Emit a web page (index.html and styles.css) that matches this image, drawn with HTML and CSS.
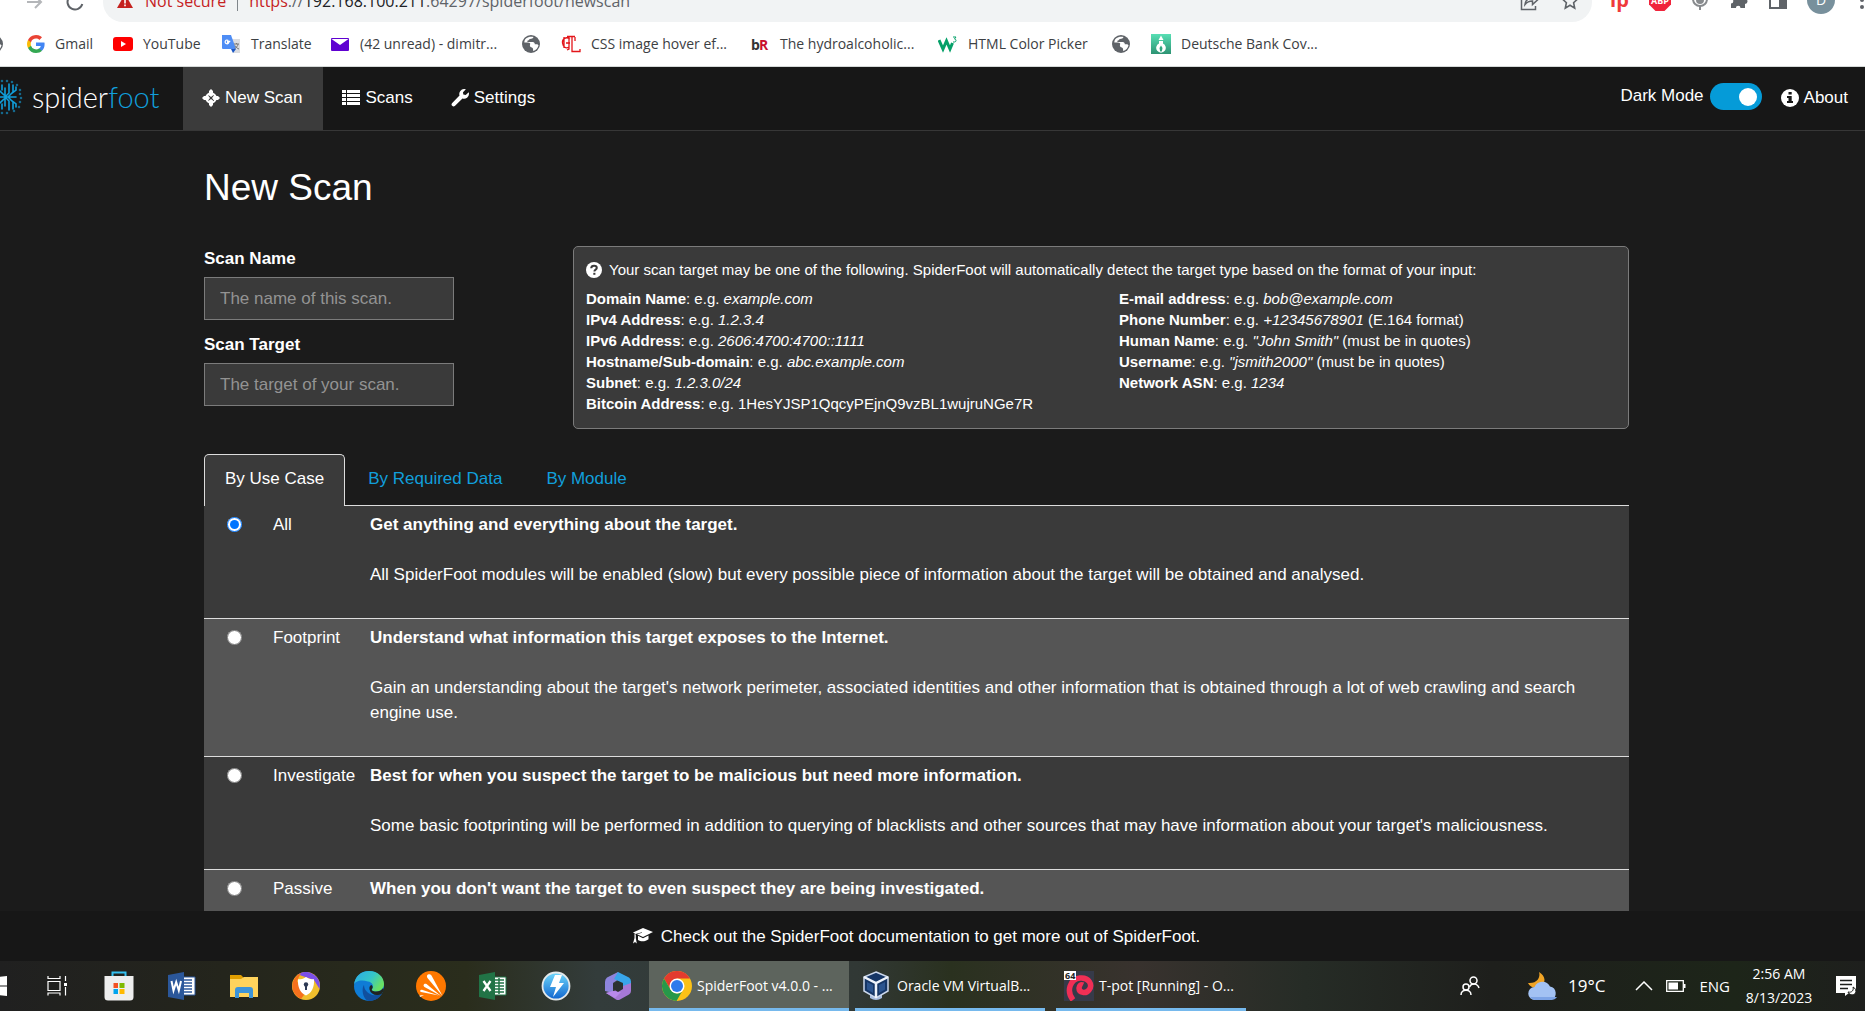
FILE: index.html
```html
<!DOCTYPE html>
<html lang="en">
<head>
<meta charset="utf-8">
<title>SpiderFoot v4.0.0 - New Scan</title>
<link rel="stylesheet" href="styles.css">
</head>
<body>
<svg class="defs" aria-hidden="true">
  <symbol id="globe" viewBox="0 0 20 20"><circle cx="10" cy="10" r="9" fill="#5f6368"/><path d="M5 4.500c2-1.800 5-2.300 7.500-1.500-.5 1.500-2 1.800-3.500 2-1 .2-1 1.300-2 1.500-1.200.3-.8 1.600.4 1.600h4.400c1.400 0 2 1 2 2.200h2c.9 0 1.400.6 1.700 1.200-.6 2.600-2.600 4.800-5.300 5.500-.3-1.400.2-2-.6-2.900-.7-.8-2.500-.6-2.700-2.300-.1-1.300.7-1.700.1-2.500-.8-1-3.300-.7-5.700-.8 0-1.500.6-3 1.700-4z" fill="#fff" /></symbol>
</svg>

<header class="browser">
  <div class="toolbar">
    <button class="tool forward" aria-label="Forward"><svg width="20" height="20" viewBox="0 0 20 20" fill="none" stroke="#b4b6b9" stroke-width="2"><path d="M2 10h14M10 4l6 6-6 6"/></svg></button>
    <button class="tool reload" aria-label="Reload"><svg width="20" height="20" viewBox="0 0 20 20" fill="none" stroke="#5f6368" stroke-width="2"><path d="M16 5.500A7.500 7.500 0 1 0 17.300 12"/><path d="M17 1v5h-5"/></svg></button>
    <div class="address">
      <svg width="16" height="16" viewBox="0 0 16 16"><path d="M8 1l8 14H0z" fill="#c5221f"/><path d="M7.200 6h1.600v4.500H7.200zM7.200 11.600h1.600v1.600H7.200z" fill="#fff"/></svg>
      <span class="warn">Not secure</span>
      <span class="bar"></span>
      <span class="url"><span class="warn">https</span>://<b>192.168.100.211</b>:64297/spiderfoot/newscan</span>
      <button class="tool share" aria-label="Share"><svg width="19" height="20" viewBox="0 0 19 20" fill="none" stroke="#5f6368" stroke-width="1.500"><path d="M5 5H1.500v13.500h14V15"/><path d="M5 13.500c.5-4 3-6.500 7.500-6.500V3.500l5.500 5-5.500 5V10C9 10 7 11 5 13.500z"/></svg></button>
      <button class="tool" aria-label="Bookmark this page"><svg width="18" height="18" viewBox="0 0 18 18" fill="none" stroke="#5f6368" stroke-width="1.600"><path d="M9 1.500l2.300 5 5.200.6-3.900 3.600 1.100 5.400L9 13.300l-4.700 2.800 1.100-5.400L1.500 7.100l5.200-.6z"/></svg></button>
    </div>
    <div class="extensions">
      <span class="ext-ip">Ip</span>
      <svg width="22" height="22" viewBox="0 0 22 22"><path d="M6.500 0h9L22 6.500v9L15.500 22h-9L0 15.500v-9z" fill="#f0243c"/><text x="11" y="15" text-anchor="middle" class="abp">ABP</text></svg>
      <svg width="18" height="24" viewBox="0 0 18 24" fill="none" stroke="#888b8e" stroke-width="2"><path d="M2 11a7 7 0 1 0 14 0"/><circle cx="9" cy="12" r="3" fill="#888b8e"/><path d="M9 18v4"/></svg>
      <svg width="20" height="20" viewBox="0 0 20 20"><path d="M7 4a2.500 2.500 0 0 1 5 0h4v5a2.500 2.500 0 0 1 0 5v4h-4.500a2.300 2.300 0 0 0-4.600 0H2v-4.500a2.300 2.300 0 0 0 0-4.600V4z" fill="#5f6368"/></svg>
      <svg width="18" height="18" viewBox="0 0 18 18"><path d="M1 1h16v16H1z" fill="none" stroke="#5f6368" stroke-width="2"/><path d="M10 1h7v16h-7z" fill="#5f6368"/></svg>
      <span class="avatar">D</span>
      <svg width="6" height="20" viewBox="0 0 6 20" fill="#5f6368"><circle cx="3" cy="3" r="2"/><circle cx="3" cy="10" r="2"/><circle cx="3" cy="17" r="2"/></svg>
    </div>
  </div>
  <nav class="bookmarks" aria-label="Bookmarks">
    <a class="edge" href="#" aria-label="Site"><svg width="20" height="20"><use href="#globe"/></svg></a>
    <a href="#"><svg width="18" height="20" viewBox="0 0 18 18"><path d="M17.600 9.200c0-.6 0-1.200-.2-1.700H9v3.400h4.800a4.100 4.100 0 0 1-1.800 2.700v2.200h2.900c1.700-1.600 2.700-3.900 2.700-6.600z" fill="#4285f4"/><path d="M9 18c2.400 0 4.500-.8 6-2.200l-3-2.200a5.400 5.400 0 0 1-8-2.900H1V13a9 9 0 0 0 8 5z" fill="#34a853"/><path d="M4 10.700a5.400 5.400 0 0 1 0-3.400V5H1a9 9 0 0 0 0 8z" fill="#fbbc05"/><path d="M9 3.600c1.300 0 2.500.5 3.400 1.300L15 2.300A9 9 0 0 0 1 5l3 2.300a5.400 5.400 0 0 1 5-3.700z" fill="#ea4335"/></svg>Gmail</a>
    <a href="#"><svg width="20" height="20" viewBox="0 0 20 20"><rect y="3" width="20" height="14" rx="3" fill="#f00"/><path d="M8 7l5 3-5 3z" fill="#fff"/></svg>YouTube</a>
    <a href="#"><svg width="20" height="20" viewBox="0 0 20 20"><path d="M8 5h11v14h-7z" fill="#dadce0"/><path d="M1 1h9l5 14H2a1 1 0 0 1-1-1z" fill="#4e8df5"/><path d="M10 15h5l-3 4z" fill="#1a56c4"/><path d="M9.300 7.300H6.500v1.300h1.300a1.900 1.900 0 1 1-.5-2.100" fill="none" stroke="#fff" stroke-width="1.200"/><path d="M13 10h5M15.500 9v1M17 10c0 2-2 4-3.500 4.500M14 11.500c1 2 2.500 3 4 3.500" fill="none" stroke="#777" /></svg>Translate</a>
    <a href="#"><svg width="20" height="20" viewBox="0 0 20 20"><rect x="1" y="4" width="18" height="13" rx="1" fill="#5f01d1"/><path d="M1.500 5h17L10 11z" fill="#fff"/></svg>(42 unread) - dimitr...</a>
    <a href="#" aria-label="Site"><svg width="20" height="20"><use href="#globe"/></svg></a>
    <a href="#"><svg width="20" height="20" viewBox="0 0 20 20" fill="none" stroke="#e3151a" stroke-width="1.300"><path d="M9 5C5 2 1 5 1.500 9S5 15 8 13M3 3v11M6 2.500h8M8 3v12l-2 1M11 3v14.500h8V15M14 3v4M5 9h4"/></svg>CSS image hover ef...</a>
    <a href="#"><svg width="20" height="20" viewBox="0 0 20 20" class="br"><text x="1" y="16" fill="#333">b</text><text x="9" y="16" fill="#c8102e">R</text></svg>The hydroalcoholic...</a>
    <a href="#"><svg width="20" height="20" viewBox="0 0 20 20"><path d="M1 6l4 9 3.500-8 3.500 8 2.500-6" fill="none" stroke="#04a068" stroke-width="3"/><path d="M15 3h3l-1.500 2c2 0 2 3 0 3H15" fill="none" stroke="#04a068"/></svg>HTML Color Picker</a>
    <a href="#" aria-label="Site"><svg width="20" height="20"><use href="#globe"/></svg></a>
    <a href="#"><svg width="20" height="20" viewBox="0 0 20 20"><defs><linearGradient id="dbg" x2="0" y2="1"><stop stop-color="#57dfb4"/><stop offset="1" stop-color="#2d9373"/></linearGradient></defs><path d="M0 0h20v20H0z" fill="url(#dbg)"/><path d="M10 1.500l2.500 4.500h-5z" fill="#fff"/><path d="M8 7h4v2.500a4.800 4.800 0 1 1-4 0z" fill="#fff"/><path d="M10 11.500l1.500 2.500-.7 3.500H9.200L8.500 14z" fill="#2fa57e"/></svg>Deutsche Bank Cov...</a>
  </nav>
</header>

<div class="app">
  <nav class="topnav">
    <a class="logo" href="#" aria-label="SpiderFoot">
      <svg width="24" height="36" viewBox="0 0 24 36" fill="none" stroke="#119fdb" stroke-width="1.600" stroke-linecap="round">
        <path d="M5 9v18M0 12l4 4M0 24l4-4M9 5v9l-4 4M9 31v-9l-4-4M13 6v7l-5 5 5 5v7M5 18h11M0 18h5M11 15l5-4V8M11 21l5 4v3M2 6v5M2 25v5"/>
        <g stroke="#15688c" stroke-width="2.600"><path d="M2 2h0M7 2h0M12 3h0M17 6h0M20 11h0M20 15h0M21 19h0M20 23h0M19 28h0M14 32h0M7 34h0M2 34h0"/></g>
      </svg>
      <span>spider<b>foot</b></span>
    </a>
    <a class="item active" href="#"><svg width="18" height="18" viewBox="0 0 18 18"><circle cx="9" cy="9" r="4.700" fill="none" stroke="#fff" stroke-width="2.200"/><path d="M9 0l2 2v4.500L9 8 7 6.500V2zM9 18l2-2v-4.500L9 10l-2 1.500V16zM0 9l2-2h4.500L8 9l-1.500 2H2zM18 9l-2-2h-4.500L10 9l1.500 2H16z" fill="#fff"/></svg>New Scan</a>
    <a class="item" href="#"><svg width="18" height="18" viewBox="0 0 18 18" fill="#fff"><path d="M0 1h4v3H0zM5 1h13v3H5zM0 5h4v3H0zM5 5h13v3H5zM0 9h4v3H0zM5 9h13v3H5zM0 13h4v3H0zM5 13h13v3H5z"/></svg>Scans</a>
    <a class="item" href="#"><svg width="18" height="18" viewBox="0 0 18 18" fill="#fff"><path d="M13.500 0a5 5 0 0 0-5 6.500L1 14.200a2 2 0 0 0 2.800 2.800l7.700-7.500A5 5 0 0 0 18 4.500l-.3-1.300-3 2.800-2.400-.4-.3-2.300 2.900-3z"/></svg>Settings</a>
    <div class="right">
      <label class="dark" for="dark">Dark Mode</label>
      <input class="switch" id="dark" type="checkbox" role="switch" checked>
      <a class="about" href="#"><svg width="18" height="18" viewBox="0 0 18 18"><circle cx="9" cy="9" r="9" fill="#fff"/><path d="M7.500 3h3.200v2.500H7.500zM6 7h4.700v5H12v2H6v-2h1.500V9H6z" fill="#171717"/></svg>About</a>
    </div>
  </nav>

  <main class="content">
    <h1>New Scan</h1>
    <form>
      <div class="intro">
        <div class="fields">
          <label for="name">Scan Name</label>
          <input id="name" type="text" placeholder="The name of this scan.">
          <label for="target">Scan Target</label>
          <input id="target" type="text" placeholder="The target of your scan.">
        </div>
        <section class="help">
          <p><svg width="16" height="16" viewBox="0 0 16 16"><circle cx="8" cy="8" r="8" fill="#fff"/><path d="M5.200 6.300C5.300 4.600 6.400 3.800 8 3.800s2.800.8 2.800 2.200c0 1.600-2.400 1.700-2.400 3.400" fill="none" stroke="#3a3a3a" stroke-width="2"/><path d="M7.300 10.800h2.100v2H7.300z" fill="#3a3a3a"/></svg>Your scan target may be one of the following. SpiderFoot will automatically detect the target type based on the format of your input:</p>
          <div class="types">
            <ul>
              <li><b>Domain Name</b>: e.g. <i>example.com</i></li>
              <li><b>IPv4 Address</b>: e.g. <i>1.2.3.4</i></li>
              <li><b>IPv6 Address</b>: e.g. <i>2606:4700:4700::1111</i></li>
              <li><b>Hostname/Sub-domain</b>: e.g. <i>abc.example.com</i></li>
              <li><b>Subnet</b>: e.g. <i>1.2.3.0/24</i></li>
              <li><b>Bitcoin Address</b>: e.g. 1HesYJSP1QqcyPEjnQ9vzBL1wujruNGe7R</li>
            </ul>
            <ul>
              <li><b>E-mail address</b>: e.g. <i>bob@example.com</i></li>
              <li><b>Phone Number</b>: e.g. <i>+12345678901</i> (E.164 format)</li>
              <li><b>Human Name</b>: e.g. <i>"John Smith"</i> (must be in quotes)</li>
              <li><b>Username</b>: e.g. <i>"jsmith2000"</i> (must be in quotes)</li>
              <li><b>Network ASN</b>: e.g. <i>1234</i></li>
            </ul>
          </div>
        </section>
      </div>

      <div class="tabs">
        <a class="active" href="#">By Use Case</a>
        <a href="#">By Required Data</a>
        <a href="#">By Module</a>
      </div>
      <table class="cases">
        <tr>
          <td class="pick"><input type="radio" name="usecase" id="all" checked></td>
          <td class="name"><label for="all">All</label></td>
          <td><h2>Get anything and everything about the target.</h2><p>All SpiderFoot modules will be enabled (slow) but every possible piece of information about the target will be obtained and analysed.</p></td>
        </tr>
        <tr>
          <td class="pick"><input type="radio" name="usecase" id="footprint"></td>
          <td class="name"><label for="footprint">Footprint</label></td>
          <td><h2>Understand what information this target exposes to the Internet.</h2><p>Gain an understanding about the target's network perimeter, associated identities and other information that is obtained through a lot of web crawling and search engine use.</p></td>
        </tr>
        <tr>
          <td class="pick"><input type="radio" name="usecase" id="investigate"></td>
          <td class="name"><label for="investigate">Investigate</label></td>
          <td><h2>Best for when you suspect the target to be malicious but need more information.</h2><p>Some basic footprinting will be performed in addition to querying of blacklists and other sources that may have information about your target's maliciousness.</p></td>
        </tr>
        <tr>
          <td class="pick"><input type="radio" name="usecase" id="passive"></td>
          <td class="name"><label for="passive">Passive</label></td>
          <td><h2>When you don't want the target to even suspect they are being investigated.</h2></td>
        </tr>
      </table>
    </form>
  </main>

  <footer class="docs"><a href="#"><svg width="20" height="16" viewBox="0 0 20 16" fill="#fff"><path d="M10 0l10 4-10 5L4 6.200l5-1.400v-.6L2.500 6 0 4.500z"/><path d="M5 7.800l5 2.500 5.500-2.700v3.600C13 13.400 8 14 5 12zM1.500 6l1.300.6v3.500l1 5.400L2 14l-2 1.500 1.500-5.400z"/></svg>Check out the SpiderFoot documentation to get more out of SpiderFoot.</a></footer>
</div>

<footer class="taskbar">
  <button class="start" aria-label="Start"><svg width="20" height="20" viewBox="0 0 20 20" fill="#fff"><path d="M0 2.500L8.500 1.200v8.300H0zM9.500 1L20 0v9.500H9.500zM0 10.500h8.500v8.300L0 17.500zM9.500 10.500H20V20L9.500 19z"/></svg></button>
  <div class="pinned">
    <button aria-label="Task view"><svg width="22" height="22" viewBox="0 0 22 22" fill="none" stroke="#fff" stroke-width="1.200"><path d="M2 6.500h12v9H2zM2 1v2.500h12V1M2 20.500V18h12v2.500M19.500 1v5M19.500 12v8.500"/><path d="M18 8h3v3h-3z" fill="#fff" stroke="none"/></svg></button>
    <button aria-label="Microsoft Store"><svg width="30" height="30" viewBox="0 0 30 30"><path d="M8.500 6V1.500h13V6" fill="none" stroke="#35c1f1" stroke-width="2"/><path d="M.5 5h29v21a3.500 3.500 0 0 1-3.500 3.500H4A3.500 3.500 0 0 1 .5 26z" fill="#eee"/><path d="M9.500 12H14v5H9.500z" fill="#f25022"/><path d="M15.500 12h5v5h-5z" fill="#7fba00"/><path d="M9.500 18H14v5H9.500z" fill="#00a4ef"/><path d="M15.500 18h5v5h-5z" fill="#ffb900"/></svg></button>
    <button aria-label="Word"><svg width="28" height="28" viewBox="0 0 28 28"><path d="M15 5h12v18H15z" fill="#fff" stroke="#2b579a"/><path d="M16 8h8M16 11h8M16 14h8M16 17h8M16 20h8" stroke="#2b579a" stroke-width="1.500"/><path d="M0 3l16-3v28L0 25z" fill="#2b579a"/><path d="M3.500 9l2 9.500L8.200 10l2.600 8.500L13 9" fill="none" stroke="#fff" stroke-width="2"/></svg></button>
    <button aria-label="File Explorer"><svg width="28" height="26" viewBox="0 0 28 26"><path d="M0 2h11l3 3-3 2H0z" fill="#e09e00"/><path d="M0 6h11l3-2h14v20H0z" fill="#ffd35c"/><path d="M5 25V17a3 3 0 0 1 3-3h12a3 3 0 0 1 3 3v8h-4v-5H9v5z" fill="#3d94d9"/></svg></button>
    <button aria-label="Avast Secure Browser"><svg width="28" height="28" viewBox="0 0 28 28"><circle cx="14" cy="14" r="14" fill="#f0bf2c"/><path d="M6 2.500A14 14 0 0 1 27.500 17L22 8z" fill="#7b4fe8"/><path d="M9 1A14 14 0 0 0 9 27l3-4L5 9z" fill="#f5701d"/><path d="M14 5c3 2 5 2.300 8 2.300C22.500 15 20 21 14 23.500 8 21 5.500 15 6 7.300 9 7.300 11 7 14 5z" fill="#fff"/><circle cx="14" cy="12.500" r="2.200" fill="#2d3a55"/><path d="M13 13h2v5h-2z" fill="#2d3a55"/></svg></button>
    <button aria-label="Edge"><svg width="30" height="30" viewBox="0 0 30 30"><defs><linearGradient id="eg" x2="1" y2=".5"><stop stop-color="#2ba9e8"/><stop offset=".6" stop-color="#35c6c8"/><stop offset="1" stop-color="#69e063"/></linearGradient></defs><circle cx="15" cy="15" r="15" fill="#0f7cd6"/><path d="M0 14C1 5 7 0 15 0c9 0 15 6 15 13 0 5-4 7.500-8 7.500-3 0-5-1.200-4-2.500 2.500-3 0-7-4-7.500C7 8.500 1 10 0 14z" fill="url(#eg)"/><path d="M10 14c0 6 6 11 12 10l6-1.500A15 15 0 0 1 15 30C9 29 7 18 10 14z" fill="#104f9e"/><path d="M18 18c-1 1.500 1 2.500 4 2.500 3 0 5.500-1 7.200-3.500L30 19l-2 3.500c-5 3-11 1.500-12.500-4-.5-2.500.5-4 2-4.500 1.500 1 1.500 2.800.5 4z" fill="#202420"/></svg></button>
    <button aria-label="Avast Antivirus"><svg width="30" height="30" viewBox="0 0 30 30"><circle cx="15" cy="15" r="15" fill="#ff7800"/><g fill="#fff"><path d="M26.500 25L11.500 7c-2-3 2-5 4-2.500z"/><path d="M25 25L8.500 16c-2-1.500-.5-4 2-3z"/><path d="M23 24.500L5 21c-1.500-.7-1-2.500 1-2.300z"/><path d="M8 24l-4 2-.5-1.500z"/></g></svg></button>
    <button aria-label="Excel"><svg width="28" height="28" viewBox="0 0 28 28"><path d="M15 5h12v18H15z" fill="#fff" stroke="#217346"/><path d="M16 8h9M16 11h9M16 14h9M16 17h9M16 20h9M20 6v16" stroke="#217346" stroke-width="1.500"/><path d="M0 3l16-3v28L0 25z" fill="#217346"/><path d="M4.500 9l7 10M11.500 9l-7 10" stroke="#fff" stroke-width="2.300"/></svg></button>
    <button aria-label="DAEMON Tools"><svg width="30" height="30" viewBox="0 0 30 30"><defs><linearGradient id="dt" x2="0" y2="1"><stop stop-color="#6fd8fb"/><stop offset="1" stop-color="#1065cf"/></linearGradient></defs><circle cx="15" cy="15" r="13.500" fill="url(#dt)" stroke="#e4e8ea" stroke-width="1.800"/><path d="M14 4h7l-3 8h5L12 26l3-10H9z" fill="#fff"/></svg></button>
    <button aria-label="Microsoft 365"><svg width="28" height="30" viewBox="0 0 28 30"><path d="M14 1L3 6.500Q1 8 1 11v9l8 2V12l6-4z" fill="#8d84dc"/><path d="M14 1l11 5.500q2 1.500 2 4v8l-8-2.500v-4l-9-4z" fill="#38a5ea"/><path d="M27 12v8q0 2-2 3.500l-9 5q-2 1-4 0L2 22l8-2 9-5z" fill="#a678d6"/><path d="M2 22l7-2 8 1-6 6z" fill="#b989ec"/><path d="M14 10l5 3v5l-5 3-5-3v-5z" fill="#2b3130"/></svg></button>
  </div>
  <div class="windows">
    <button class="win current"><svg width="30" height="30" viewBox="0 0 30 30"><circle cx="15" cy="15" r="15" fill="#fbc116"/><path d="M2 7.500A15 15 0 0 1 28 7.500H15l-6.500 11z" fill="#e33b2e"/><path d="M2 7.500l6.500 11A7.500 7.500 0 0 0 20 20.500L14.500 30A15 15 0 0 1 2 7.500z" fill="#27984a"/><circle cx="15" cy="15" r="7.500" fill="#fff"/><circle cx="15" cy="15" r="6" fill="#2d7bec"/></svg>SpiderFoot v4.0.0 - ...</button>
    <button class="win vbox"><svg width="26" height="30" viewBox="0 0 26 30"><path d="M7 22h12v5q-6 4-12 0z" fill="#a8bde0"/><path d="M13 1l12 5v14l-12 7-12-7V6z" fill="#163666" stroke="#cbd7ec" stroke-width="1.500"/><path d="M1 6l12 6 12-6M13 12v15" fill="none" stroke="#eef3fb" stroke-width="2.500"/><path d="M4 11l6 3v8l-6-3.500zM22 11l-6 3v8l6-3.500z" fill="#2b548f"/></svg>Oracle VM VirtualB...</button>
    <button class="win"><svg width="30" height="30" viewBox="0 0 30 30"><path d="M0 0h30v30H0z" fill="#363a49"/><path d="M9 29C2 20 6 8 16 7c9-1 13 7 9 12-3 4-10 3-10-2 0-2 2-4 4-3" fill="none" stroke="#f02f55" stroke-width="5.500"/><path d="M0 0h12v9H0z" fill="#fff"/><text x="1" y="8" class="badge64">64</text></svg>T-pot [Running] - O...</button>
  </div>
  <div class="tray">
    <button aria-label="People"><svg width="20" height="20" viewBox="0 0 20 20" fill="none" stroke="#fff" stroke-width="1.500"><circle cx="13.500" cy="4.500" r="3.500"/><path d="M9.500 11c2-4 8-4 9.500 1"/><circle cx="6" cy="11" r="3"/><path d="M1 19c0-6.500 10-6.500 10 0"/></svg></button>
    <button class="weather"><svg width="30" height="30" viewBox="0 0 30 30"><path d="M11 1c2 6-3 12-11 11 2 5 9 6 13 3 5-3 5-10-2-14z" fill="#f0a426"/><path d="M7 29a6.500 6.500 0 0 1-.5-13A8.500 8.500 0 0 1 22 15.500 7 7 0 0 1 23 29z" fill="#a3c2f3"/><path d="M2 26q2 3 5 3h16q4 0 6-3z" fill="#7da4e6"/></svg>19°C</button>
    <button aria-label="Show hidden icons"><svg width="18" height="10" viewBox="0 0 18 10" fill="none" stroke="#fff" stroke-width="1.500"><path d="M1 9l8-8 8 8"/></svg></button>
    <button aria-label="Battery"><svg width="20" height="12" viewBox="0 0 20 12"><path d="M.7.700h16.600v10.600H.7z" fill="none" stroke="#fff" stroke-width="1.300"/><path d="M2.500 2.500H12v7H2.500zM18 4h1.500v4H18z" fill="#fff"/></svg></button>
    <button>ENG</button>
    <button class="clock"><span>2:56 AM</span><span>8/13/2023</span></button>
    <button aria-label="Notifications"><svg width="20" height="20" viewBox="0 0 20 20"><path d="M0 0h20v17h-7l-4 3v-3H0z" fill="#fff"/><path d="M4 4.500h12M4 8.500h12M4 12.500h8" stroke="#1e1f1c" stroke-width="1.300"/><path d="M17 11c1 3-1 6-5 5 1 3 6 4 7.500 1 1-2 0-5-2.500-6z" fill="#fff" stroke="#1e1f1c"/></svg></button>
  </div>
</footer>
</body>
</html>
```
FILE: styles.css
```css
* { box-sizing: border-box; }

body {
  margin: 0;
  height: 100vh;
  display: flex;
  flex-direction: column;
  overflow: hidden;
  padding-bottom: 10px;
  background: #fff;
  color: #fff;
  font: 17px/25px "Liberation Sans", Arial, sans-serif;
}

a { color: inherit; text-decoration: none; }
button { border: 0; padding: 0; background: none; color: inherit; font: inherit; }
svg { flex: none; }
h1, h2, p, ul { margin: 0; padding: 0; font-weight: 400; }
.defs { display: none; }

/* Browser frame */
.browser {
  flex: none;
  background: #fff;
  border-bottom: 1px solid #d5d9d8;
  color: #3c4043;
  font: 14px/20px "Open Sans", "Noto Sans", sans-serif;
}
.toolbar {
  height: 22px;
  display: flex;
  align-items: flex-end;
  overflow: hidden;
  padding-left: 25px;
}
.tool { display: flex; align-items: center; height: 40px; }
.reload { margin: 0 18px 0 20px; }
.address {
  flex: 1;
  display: flex;
  align-items: center;
  height: 42px;
  padding: 0 13px 0 14px;
  border-radius: 20px;
  background: #f1f3f4;
  font-size: 16px;
  white-space: nowrap;
}
.address .warn { color: #c5221f; }
.address > .warn { margin-left: 12px; }
.address .bar { width: 1px; height: 20px; margin: 0 11px; background: #80868b; }
.url { flex: 1; color: #5f6368; }
.url b { color: #202124; font-weight: 400; }
.share { margin-right: 22px; }
.extensions {
  display: flex;
  align-items: center;
  gap: 20px;
  height: 44px;
  padding-left: 18px;
}
.ext-ip { font-size: 20px; font-weight: 700; color: #ef3a3a; }
.abp { font: 700 9px "Open Sans", sans-serif; fill: #fff; }
.avatar {
  width: 28px;
  height: 28px;
  margin-right: 4px;
  border-radius: 50%;
  background: #78909c;
  color: #fff;
  line-height: 28px;
  text-align: center;
}

.bookmarks {
  display: grid;
  grid-template-columns: 27px 86px 108px 109px 191px 40px 189px 188px 173px 40px auto;
  align-items: center;
  height: 44px;
  white-space: nowrap;
}
.bookmarks a { display: flex; align-items: center; gap: 10px; }
.bookmarks .edge { justify-content: flex-end; padding-right: 23px; }
.br { font: 700 14px "Open Sans", sans-serif; }

/* Application */
.app {
  flex: 1;
  min-height: 0;
  display: flex;
  flex-direction: column;
  background: #1b1b1b;
}
.topnav {
  flex: none;
  display: flex;
  height: 64px;
  background: #171717;
  border-bottom: 1px solid #373737;
}
.logo {
  display: flex;
  align-items: center;
  gap: 8px;
  width: 183px;
  padding-bottom: 4px;
  font: 300 29px/36px Lato, "Open Sans", sans-serif;
}
.logo b { color: #119fdb; font-weight: 300; }
.item {
  display: flex;
  align-items: center;
  gap: 5px;
  padding: 0 19px 2px 19px;
}
.item.active { padding-right: 21px; background: #3b3b3b; }
.right {
  display: flex;
  align-items: center;
  margin-left: auto;
  padding-right: 17px;
}
.dark { padding-bottom: 6px; }
.switch {
  appearance: none;
  display: flex;
  justify-content: flex-end;
  align-items: center;
  width: 52px;
  height: 27px;
  margin: 0 19px 4px 6px;
  padding: 0 5px;
  border-radius: 14px;
  background: #059bd8;
}
.switch::before {
  content: "";
  width: 18px;
  height: 18px;
  border-radius: 50%;
  background: #fff;
}
.about { display: flex; align-items: center; gap: 5px; padding-bottom: 2px; }

.content {
  flex: 1;
  min-height: 0;
  overflow: hidden;
  padding: 36px 236px 0 204px;
}
h1 { font-size: 37px; line-height: 41px; margin-bottom: 38px; }
.intro { display: flex; justify-content: space-between; gap: 119px; margin-bottom: 25px; }
.fields { flex: none; width: 250px; }
.fields label { display: block; padding-bottom: 6px; font-weight: 700; }
.fields input {
  display: block;
  width: 100%;
  height: 43px;
  margin-bottom: 12px;
  padding: 0 15px;
  border: 1px solid #7b7b7b;
  background: #3a3a3a;
  color: #fff;
  font: inherit;
}
.fields input::placeholder { color: #939393; }
.help {
  flex: 1;
  padding: 12px;
  border: 1px solid #7b7b7b;
  border-radius: 5px;
  background: #3a3a3a;
  font-size: 15px;
  line-height: 21px;
}
.help p { display: flex; align-items: center; gap: 7px; margin-bottom: 8px; }
.types { display: grid; grid-template-columns: 533px 1fr; padding-bottom: 2px; }
.types li { list-style: none; }

.tabs {
  display: flex;
  gap: 2px;
  height: 52px;
  border-bottom: 1px solid #ddd;
}
.tabs a {
  height: 52px;
  padding: 11px 20px 0;
  border: 1px solid transparent;
  border-bottom: 0;
  border-radius: 5px 5px 0 0;
  color: #119fdb;
}
.tabs .active { border-color: #ddd; background: #3a3a3a; color: #fff; }

.cases { width: 100%; border-collapse: collapse; }
.cases tr { background: #3a3a3a; border-bottom: 1px solid #ddd; }
.cases tr:nth-child(even) { background: #555; }
.cases td { padding: 6px 6px 31px 0; vertical-align: top; }
.cases .pick { width: 69px; padding-left: 23px; }
.cases .pick input { display: block; width: 15px; height: 15px; margin: 5px 0 0; }
.cases .name { width: 97px; padding-right: 0; }
.cases h2 { font-size: 17px; line-height: 25px; font-weight: 700; }
.cases p { margin-top: 25px; }

.docs {
  flex: none;
  display: flex;
  justify-content: center;
  height: 50px;
  padding-right: 32px;
  background: #171717;
}
.docs a { display: flex; align-items: center; gap: 8px; }

/* Desktop taskbar */
.taskbar {
  flex: none;
  display: flex;
  height: 50px;
  background: linear-gradient(90deg, #202020 0, #24251c 12%, #2a2d1c 25%, #333c3b 32%, #313835 46%, #2a311f 51%, #38322e 61%, #262c26 70%, #1e1f1c 80%, #1d2519 93%, #1e1f1d 100%);
  font: 15px/24px "Open Sans", "Noto Sans", sans-serif;
  white-space: nowrap;
}
.start { display: flex; justify-content: flex-end; align-items: center; width: 26px; padding-right: 19px; }
.pinned { display: flex; width: 623px; }
.pinned button { flex: 1; display: flex; align-items: center; justify-content: center; }
.windows { display: flex; gap: 6px; }
.win {
  display: flex;
  align-items: center;
  gap: 5px;
  width: 190px;
  padding: 3px 8px 0;
  border-bottom: 3px solid #76b9ed;
  font-size: 14px;
}
.win.vbox { gap: 8px; }
.win:last-child { margin-left: 5px; }
.current { width: 200px; padding-left: 13px; background: #5d645d; }
.tray { display: flex; align-items: center; margin-left: auto; padding-right: 9px; }
.tray button { display: flex; align-items: center; }
.tray button + button { margin-left: 13px; }
.tray .weather { gap: 10px; margin: 0 17px 0 48px; font-size: 17px; }
.tray .clock { flex-direction: column; width: 80px; margin: 0 4px 0 9px; font-size: 14px; }
.badge64 { font: 700 9px "Open Sans", sans-serif; fill: #222; }
```
